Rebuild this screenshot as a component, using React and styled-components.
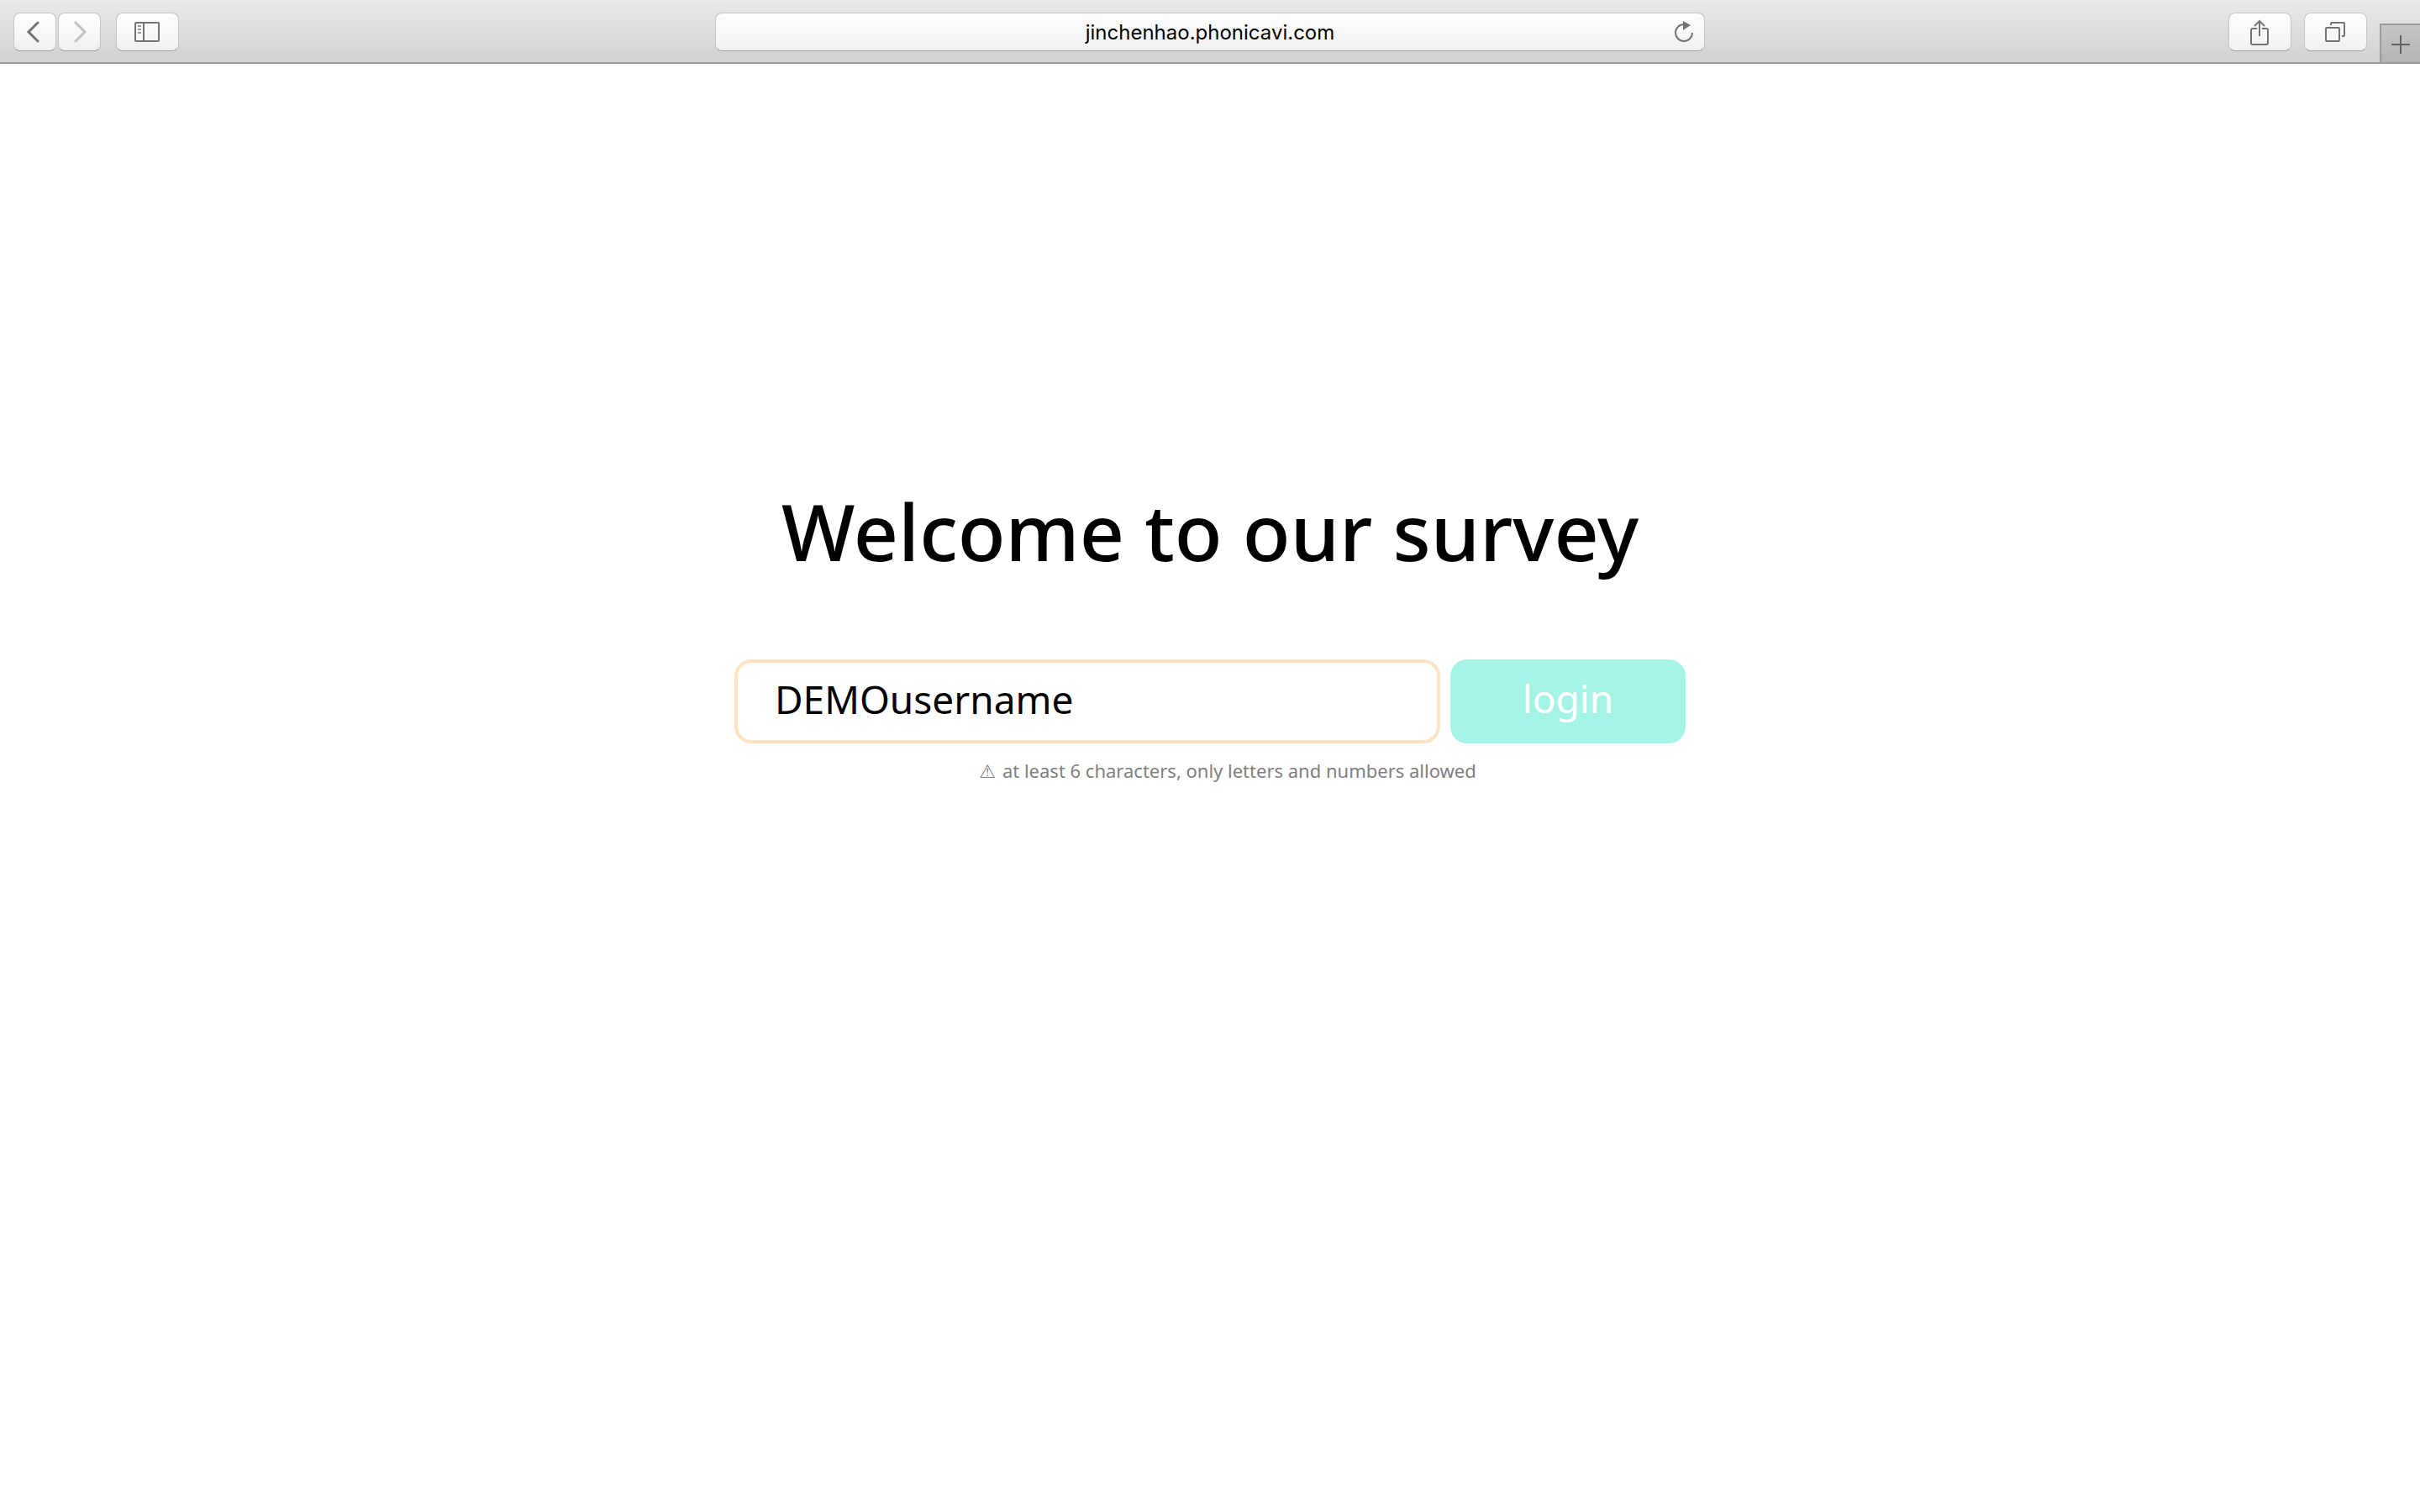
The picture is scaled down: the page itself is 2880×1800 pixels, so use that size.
import React, { useState } from "react";
import styled, { createGlobalStyle } from "styled-components";

const GlobalStyle = createGlobalStyle`
  *, *::before, *::after { box-sizing: border-box; }
  body {
    margin: 0;
    background: #fff;
    color: #000;
    font-family: "Noto Sans", "Open Sans", sans-serif;
  }
  button, input { font: inherit; margin: 0; }
`;

const Toolbar = styled.header`
  display: grid;
  grid-template-columns: minmax(0, 851fr) minmax(0, 1178fr) minmax(0, 851fr);
  align-items: center;
  height: 76px;
  border-bottom: 2px solid #9c9c9c;
  background: linear-gradient(#eaeaea, #d1d1d1);
`;

const ToolGroup = styled.div`
  display: flex;
  align-items: center;
  gap: ${(p) => p.$gap}px;
  padding: ${(p) => (p.$inset ? "2px 0 0 16px" : "0")};
`;

const ToolButton = styled.button`
  display: flex;
  align-items: center;
  justify-content: center;
  width: ${(p) => (p.$narrow ? 51 : 75)}px;
  height: 46px;
  padding: 0;
  border: 1px solid #c6c6c6;
  border-bottom-color: #9e9e9e;
  border-radius: 8px;
  background: linear-gradient(#fefefe, #f1f1f1);
  color: ${(p) => (p.disabled ? "#c2c2c2" : "#747474")};
`;

const AddressBar = styled.div`
  display: flex;
  align-items: center;
  height: 46px;
  margin-top: 2px;
  padding-left: 48px;
  border: 1px solid #c6c6c6;
  border-bottom-color: #9e9e9e;
  border-radius: 8px;
  background: linear-gradient(#fefefe, #f1f1f1);
`;

const AddressInput = styled.input`
  flex: 1;
  min-width: 0;
  padding: 2px 0 0;
  border: 0;
  outline: 0;
  background: transparent;
  color: #000;
  font-family: Inter, Roboto, sans-serif;
  font-size: 24px;
  line-height: 32px;
  text-align: center;
`;

const ReloadButton = styled.button`
  display: flex;
  align-items: center;
  justify-content: center;
  width: 48px;
  height: 44px;
  padding: 0;
  border: 0;
  background: transparent;
  color: #747474;
`;

const NewTabButton = styled.button`
  display: flex;
  align-items: center;
  justify-content: center;
  align-self: flex-end;
  width: 48px;
  height: 46px;
  padding: 2px 0 0;
  border: solid #9c9c9c;
  border-width: 2px 0 0 2px;
  background: linear-gradient(#c5c5c5, #b4b4b4);
  color: #636363;
`;

const EndTools = styled.div`
  display: flex;
  align-items: center;
  justify-content: flex-end;
  gap: 15px;
  height: 74px;
  padding-top: 2px;
`;

const Page = styled.main`
  display: flex;
  flex-direction: column;
  align-items: center;
  padding: 500px 24px 0;
`;

const Title = styled.h1`
  margin: 0 0 97px;
  font-size: 93px;
  font-weight: 500;
  line-height: 112px;
`;

const LoginForm = styled.form`
  display: flex;
  flex-wrap: wrap;
  gap: 16px 12px;
  width: 100%;
  max-width: 1132px;
`;

const NameInput = styled.input`
  flex: 1;
  min-width: 0;
  height: 100px;
  padding: 0 44px 6px;
  border: 4px solid #ffe4c4;
  border-radius: 20px;
  outline: 0;
  background: #fff;
  color: #000;
  font-size: 46px;
`;

const LoginButton = styled.button`
  width: 280px;
  height: 100px;
  padding: 0 0 8px;
  border: 0;
  border-radius: 20px;
  background: #a5f4e5;
  color: #fff;
  font-size: 46px;
`;

const Hint = styled.p`
  display: flex;
  align-items: baseline;
  justify-content: center;
  gap: 8px;
  width: 100%;
  margin: 0;
  padding-left: 42px;
  color: #808080;
  font-size: 22px;
  line-height: 32px;
`;

const Warning = styled.span`
  font-family: "DejaVu Sans", sans-serif;
`;

const Icon = ({ w, h, sw = 2, children }) => (
  <svg
    width={w}
    height={h}
    viewBox={`0 0 ${w} ${h}`}
    fill="none"
    stroke="currentColor"
    strokeWidth={sw}
    aria-hidden="true"
  >
    {children}
  </svg>
);

const BackIcon = () => (
  <Icon w={24} h={26} sw={3}>
    <path d="M15 2 4 13l11 11" strokeLinecap="round" />
  </Icon>
);

const ForwardIcon = () => (
  <Icon w={24} h={26} sw={3}>
    <path d="M7 2l11 11L7 24" strokeLinecap="round" />
  </Icon>
);

const SidebarIcon = () => (
  <Icon w={31} h={24}>
    <rect x="1" y="1" width="28" height="22" rx="1" />
    <path d="M11 1v22" />
    <path d="M4 5h4M4 9h4M4 13h4" stroke="#9a9a9a" />
  </Icon>
);

const ReloadIcon = () => (
  <Icon w={24} h={28}>
    <path d="M22 15A10 10 0 1 1 12 5" />
    <path d="M11 1v11l9-6z" fill="currentColor" stroke="none" />
  </Icon>
);

const ShareIcon = () => (
  <Icon w={25} h={32}>
    <path d="M9 12H4a2 2 0 0 0-2 2v15a2 2 0 0 0 2 2h16a2 2 0 0 0 2-2V14a2 2 0 0 0-2-2h-5" />
    <path d="M12 21V3M6 9l6-6 6 6" />
  </Icon>
);

const TabsIcon = () => (
  <Icon w={25} h={24}>
    <rect x="1" y="7" width="16" height="16" rx="1" />
    <path d="M7 4V2a1 1 0 0 1 1-1h14a1 1 0 0 1 1 1v14a1 1 0 0 1-1 1h-2" />
  </Icon>
);

const PlusIcon = () => (
  <Icon w={22} h={22}>
    <path d="M11 0v22M0 11h22" />
  </Icon>
);

export default function App() {
  const [url, setUrl] = useState("jinchenhao.phonicavi.com");
  const [name, setName] = useState("DEMOusername");

  return (
    <>
      <GlobalStyle />
      <Toolbar>
        <ToolGroup $gap={18} $inset>
          <ToolGroup $gap={2}>
            <ToolButton $narrow aria-label="Back">
              <BackIcon />
            </ToolButton>
            <ToolButton $narrow disabled aria-label="Forward">
              <ForwardIcon />
            </ToolButton>
          </ToolGroup>
          <ToolButton aria-label="Show sidebar">
            <SidebarIcon />
          </ToolButton>
        </ToolGroup>
        <AddressBar>
          <AddressInput
            aria-label="Address"
            value={url}
            onChange={(e) => setUrl(e.target.value)}
          />
          <ReloadButton aria-label="Reload">
            <ReloadIcon />
          </ReloadButton>
        </AddressBar>
        <EndTools>
          <ToolButton aria-label="Share">
            <ShareIcon />
          </ToolButton>
          <ToolButton aria-label="Show all tabs">
            <TabsIcon />
          </ToolButton>
          <NewTabButton aria-label="New tab">
            <PlusIcon />
          </NewTabButton>
        </EndTools>
      </Toolbar>
      <Page>
        <Title>Welcome to our survey</Title>
        <LoginForm onSubmit={(e) => e.preventDefault()}>
          <NameInput
            aria-label="Username"
            aria-describedby="name-hint"
            value={name}
            onChange={(e) => setName(e.target.value)}
          />
          <LoginButton type="submit">login</LoginButton>
          <Hint id="name-hint">
            <Warning>⚠</Warning>
            <span>at least 6 characters, only letters and numbers allowed</span>
          </Hint>
        </LoginForm>
      </Page>
    </>
  );
}
